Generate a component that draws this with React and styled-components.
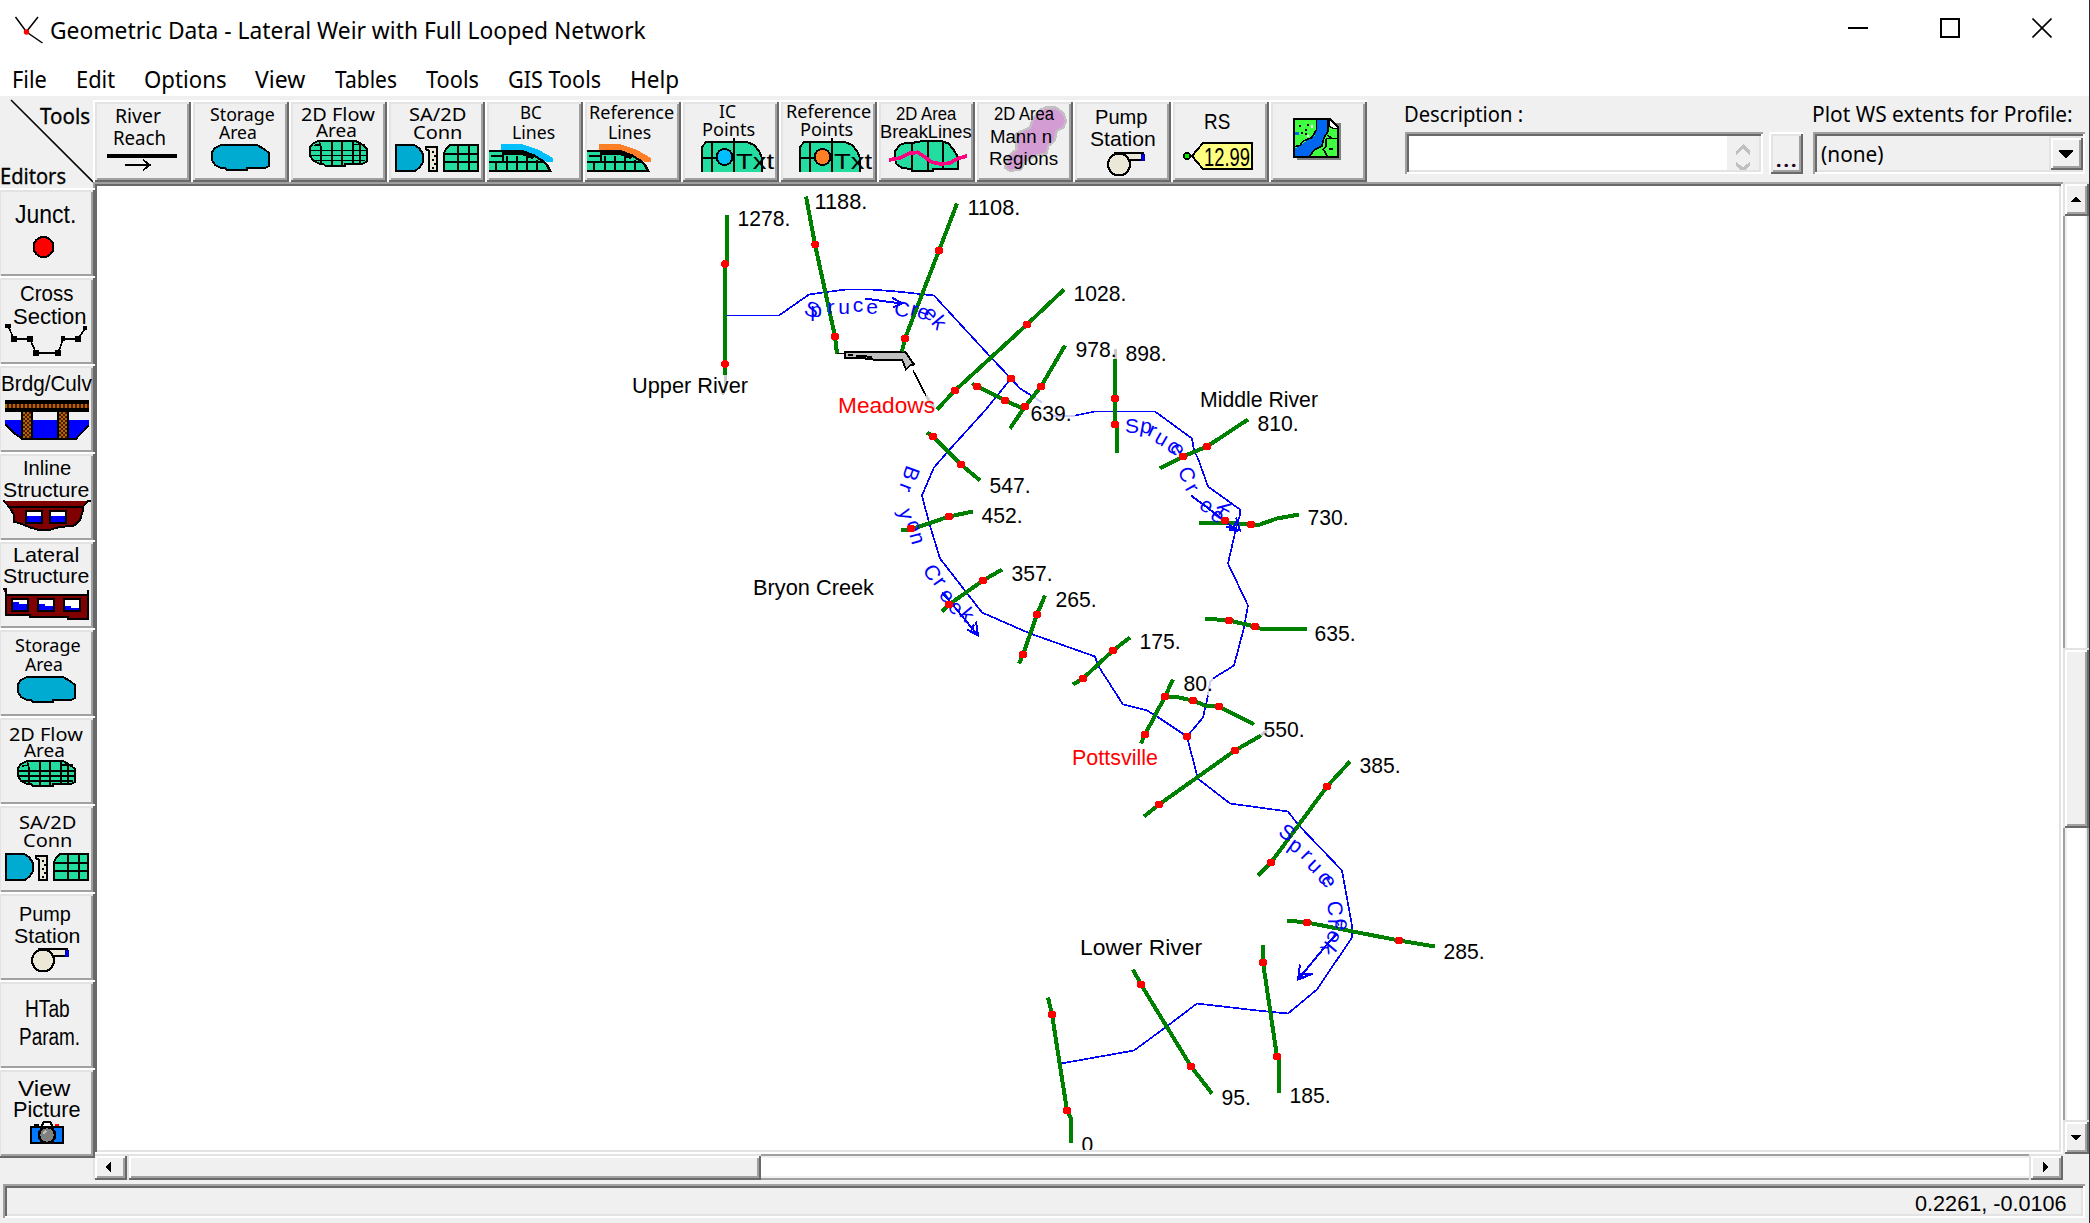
import React, { useLayoutEffect, useRef, useState } from "react";
import styled, { createGlobalStyle, css } from "styled-components";

const UI = '"Noto Sans", "Open Sans", sans-serif';
const ARIAL = '"Liberation Sans", Arial, sans-serif';

const GlobalStyle = createGlobalStyle`
  * { box-sizing: border-box; }
  body { margin: 0; background: #f0f0f0; overflow: hidden; }
`;

/* ---------- bevels ---------- */
const bevel = (tl1, tl2, br2, br1) => css`
  box-shadow: inset 2px 2px ${tl1}, inset -2px -2px ${br1}, inset 4px 4px ${tl2}, inset -4px -4px ${br2};
`;
const raised = bevel("#fff", "#e3e3e3", "#a0a0a0", "#696969");
const thumb = bevel("#e3e3e3", "#fff", "#a0a0a0", "#696969");
const sunken = bevel("#a0a0a0", "#696969", "#e3e3e3", "#fff");
const groove = bevel("#a0a0a0", "#f0f0f0", "#f0f0f0", "#a0a0a0");

/* ---------- text that fills a given width ---------- */
const FitSpan = styled.span`
  display: inline-block;
  white-space: pre;
  transform-origin: 0 50%;
`;
function Fit({ width, children }) {
  const ref = useRef(null);
  const [scale, setScale] = useState(1);
  useLayoutEffect(() => {
    setScale(width / ref.current.offsetWidth);
  }, [width, children]);
  return (
    <FitSpan ref={ref} style={{ transform: `scaleX(${scale})` }}>
      {children}
    </FitSpan>
  );
}

/* ---------- window frame ---------- */
const Window = styled.div`
  display: flex;
  flex-direction: column;
  width: 2090px;
  height: 1223px;
  background: #f0f0f0;
  border-right: 1px solid #2b2b2b;
  font-family: ${UI};
  color: #000;
  overflow: hidden;
`;
const TitleBar = styled.header`
  display: flex;
  align-items: center;
  height: 60px;
  padding-left: 14px;
  padding-right: 1px;
  background: #fff;
`;
const Title = styled.h1`
  flex: 1;
  margin: 0 0 0 6px;
  font-size: 23.5px;
  font-weight: 400;
  line-height: 60px;
`;
const Caption = styled.button`
  display: grid;
  place-items: center;
  width: 92px;
  height: 56px;
  padding: 0;
  margin-bottom: 4px;
  border: 0;
  background: none;
`;
const MenuBar = styled.nav`
  height: 36px;
  background: #fff;
  display: flex;
  padding-left: 12px;
`;
const MenuItem = styled.a`
  width: ${(p) => p.$w}px;
  font-size: 23px;
  line-height: 39px;
`;
const Body = styled.div`
  display: flex;
  height: 1084px;
`;
const LeftColumn = styled.aside`
  position: relative;
  z-index: 1;
  width: 93px;
`;
const Corner = styled.div`
  display: grid;
  height: 92px;
  > * { grid-area: 1 / 1; }
`;
const CornerText = styled.div`
  font-size: 21px;
  line-height: 24px;
  padding: ${(p) => p.$pad};
  -webkit-text-stroke: 0.3px #000;
`;
const RightColumn = styled.main`
  flex: 1;
  min-width: 0;
`;
const ToolRow = styled.div`
  display: flex;
  height: 86px;
  padding-top: 4px;
`;

/* ---------- picture buttons ---------- */
const Face = styled.button`
  display: grid;
  flex: none;
  width: 98px;
  height: ${(p) => p.$h}px;
  padding: 0;
  border: 0;
  overflow: hidden;
  background: #f0f0f0;
  color: #000;
  ${raised}
  ${(p) => p.$side && css`
    margin: 0 0 -2px -3px;
    position: relative;
  `}
  > * { grid-area: 1 / 1; }
`;
const Lines = styled.div`
  font-family: ${(p) => (p.$pixel ? ARIAL : UI)};
  font-size: ${(p) => p.$fs}px;
  line-height: ${(p) => p.$lh}px;
  padding-top: ${(p) => Math.max(0, p.$base + 1 - p.$lh / 2 - (p.$pixel ? 0.347 : 0.388) * p.$fs)}px;
  text-align: left;
`;
const Line = styled.div`
  height: ${(p) => p.$lh}px;
  padding-left: ${(p) => p.$x}px;
`;

function PictureButton({ x, y, h, side, item }) {
  const { lines = [], fs, lh = 20, base, pixel, art } = item;
  return (
    <Face $h={h} $side={side}>
      <svg width="98" height={h} viewBox={`${x} ${y} 98 ${h}`} shapeRendering="crispEdges">
        {art}
      </svg>
      {lines.length > 0 && (
        <Lines $fs={fs} $lh={lh} $base={base - y} $pixel={pixel}>
          {lines.map(([text, from, to], i) => (
            <Line key={i} $x={from - x} $lh={lh}>
              <Fit width={to - from}>{text}</Fit>
            </Line>
          ))}
        </Lines>
      )}
    </Face>
  );
}

/* ---------- glyphs ---------- */
const BLOB = "M10 1H46L53 5L58 9V22L54 24H36V26H16L14 24H10L4 21L1 16V8L4 4Z";
const StorageGlyph = ({ x, y }) => (
  <g transform={`translate(${x} ${y})`}>
    <path d={BLOB} fill="#00abd1" stroke="#000" strokeWidth="2" />
  </g>
);
const FlowGlyph = ({ x, y }) => (
  <g transform={`translate(${x} ${y})`} stroke="#000" strokeWidth="2">
    <path d={BLOB} fill="#23dca0" />
    <path d="M10 1L12 8V24M23 1V26M33 1V26M44 1V24M44 5H56M51 5V23M2 11H58M2 16H58M4 21H56M5 6L12 5" fill="none" strokeWidth="1.6" />
  </g>
);
const ConnGlyph = ({ x, y }) => (
  <g transform={`translate(${x} ${y})`} stroke="#000" strokeWidth="2">
    <path d="M1 1H19L24 4L28 10V18L25 23L20 27H1Z" fill="#00abd1" />
    <path d="M31 3H42V27H34V7L31 5Z" fill="#ece8d8" />
    <path d="M37 8H39M39 12H41M37 16H39M39 20H41M37 24H39" />
    <path d="M55 1H83V27H49V9L51 5Z" fill="#23dca0" />
    <path d="M63 1V27M74 1V27M49 10H83M49 18H83" fill="none" />
  </g>
);
const PumpGlyph = ({ x, y }) => (
  <g transform={`translate(${x} ${y})`} stroke="#000" strokeWidth="2">
    <path d="M8 1H36V8H22V9H10Z" fill="#ece8d8" />
    <rect x="34" y="2" width="3" height="6" fill="#00f" stroke="#00a" strokeWidth="1" />
    <circle cx="12" cy="12.5" r="11" fill="#ece8d8" />
  </g>
);
const BoundaryGlyph = ({ x, color }) => (
  <g transform={`translate(${x} 0)`}>
    <path d="M12 144H33L50 150L64 158V162L58 162L44 154L30 150H12Z" fill={color} />
    <path d="M0 151H30L44 155L54 161L58 165L61 172H0Z" fill="#23dca0" />
    <path d="M0 151H30L44 155L54 161L58 165L61 171H0" fill="none" stroke="#000" strokeWidth="2.4" />
    <path d="M14 152H32L45 157" fill="none" stroke="#000" strokeWidth="5" />
    <path d="M2 156H14M0 162H55M14 151V162M7 162V172M18 156V172M28 156V172M38 157V172M48 160V172" fill="none" stroke="#000" strokeWidth="2" />
  </g>
);
const PointGlyph = ({ x, color }) => (
  <g transform={`translate(${x} 0)`} stroke="#000" strokeWidth="2">
    <path d="M1 172V147L5 142H46L53 145L58 151L61 158V172" fill="#23dca0" />
    <path d="M11 142V172M33 138V172M1 158H16" fill="none" />
    <circle cx="23.500" cy="157" r="8" fill={color} />
    <text x="35" y="169" fontFamily="Liberation Sans" fontSize="22" strokeWidth="0" textLength="38" lengthAdjust="spacingAndGlyphs">Txt</text>
  </g>
);

const toolbarItems = [
  { lines: [["River", 115, 161], ["Reach", 113, 166]], fs: 19, lh: 22, base: 122,
    art: <g stroke="#000" fill="none"><path d="M107 156H177" strokeWidth="4" /><path d="M125 165H150M143 160L150 165L143 170" strokeWidth="1.8" /></g> },
  { lines: [["Storage", 210, 275], ["Area", 219, 257]], fs: 18, lh: 18, base: 119.7, art: <StorageGlyph x={211} y={144} /> },
  { lines: [["2D Flow", 301, 375], ["Area", 316, 357]], fs: 18, lh: 16, base: 119.7, art: <FlowGlyph x={309} y={139.500} /> },
  { lines: [["SA/2D", 409, 467], ["Conn", 413, 463]], fs: 18, lh: 18, base: 119.7, art: <ConnGlyph x={395} y={144} /> },
  { lines: [["BC", 520, 542], ["Lines", 512, 555]], fs: 18.5, lh: 20, base: 117.7, art: <BoundaryGlyph x={489} color="#00bfff" /> },
  { lines: [["Reference", 589, 674], ["Lines", 608, 651]], fs: 18.5, lh: 20, base: 117.7, art: <BoundaryGlyph x={587} color="#ff7f27" /> },
  { lines: [["IC", 719, 736], ["Points", 702, 755]], fs: 18.5, lh: 18.5, base: 117.3, art: <PointGlyph x={701} color="#00bfff" /> },
  { lines: [["Reference", 786, 871], ["Points", 800, 853]], fs: 18.5, lh: 18.5, base: 117.3, art: <PointGlyph x={799} color="#ff7f27" /> },
  { lines: [["2D Area", 896, 956], ["BreakLines", 880, 972]], fs: 17.5, lh: 17.7, base: 120, pixel: true,
    art: (
      <g transform="translate(870 96) scale(0.33333)" stroke="#000" strokeWidth="6">
        <path d="M90 147L105 141H125L160 135H212L235 142L250 160L265 185V218H188V226H125V220L95 215L80 205L75 190V165Z" fill="#23dca0" />
        <path d="M126 141V226M174 135V226M220 137V218" fill="none" />
        <path d="M57 192L90 186L118 172L143 169L160 180L185 198L212 204L240 201L262 188L291 180" fill="none" stroke="#ff0080" strokeWidth="11" />
      </g>
    ) },
  { lines: [["2D Area", 994, 1054], ["Mann n", 990, 1052], ["Regions", 989, 1058]], fs: 18, lh: 22.7, base: 119.5, pixel: true,
    art: (
      <g transform="translate(870 96) scale(0.33333)">
        <path d="M510 42L525 35H558L580 52L588 75L580 95L560 105L555 132L535 150L530 172L500 178L470 192L452 220L420 225L405 215L415 180L440 160V112L480 95L490 65Z" fill="#d39dd3" stroke="#c3bfc3" strokeWidth="7" />
      </g>
    ) },
  { lines: [["Pump", 1095, 1148], ["Station", 1090, 1156]], fs: 20.5, lh: 22.5, base: 123.3, pixel: true, art: <PumpGlyph x={1107} y={152} /> },
  { lines: [["RS", 1204, 1230]], fs: 22.5, lh: 22, base: 128.8, pixel: true,
    art: (
      <g>
        <path d="M1192 156L1203 143H1252V169H1203Z" fill="#ffff80" stroke="#000" strokeWidth="2" />
        <circle cx="1187" cy="156" r="3" fill="#0e0" stroke="#000" strokeWidth="1.5" />
        <text x="1204" y="165.500" fontFamily="Liberation Sans" fontSize="25" textLength="46" lengthAdjust="spacingAndGlyphs">12.99</text>
      </g>
    ) },
  { art: (
      <g transform="translate(870 96) scale(0.33333)">
        <path d="M1281 80H1412V192H1281Z" fill="#808080" />
        <path d="M1272 69H1380L1404 94V184H1272Z" fill="#40ff40" stroke="#000" strokeWidth="6" />
        <path d="M1340 72H1374V105L1362 122L1356 150L1335 160L1320 181H1275V158L1290 148L1318 130L1335 118L1340 100Z" fill="#0066f0" />
        <path d="M1275 152L1290 148L1300 135L1325 125L1340 100V72M1374 72V105L1362 126L1356 150L1335 160L1318 181M1368 128H1404M1368 128V150L1360 160L1372 180M1385 126L1372 118" fill="none" stroke="#000" strokeWidth="5" />
        <path d="M1378 70L1404 96L1390 98L1378 90Z" fill="#fff" stroke="#000" strokeWidth="4" />
        <path d="M1276 107H1288V118H1276Z" fill="#0066f0" />
        <path d="M1288 88H1294V94H1288ZM1306 98H1312V104H1306ZM1294 108H1300V114H1294ZM1310 84H1316V90H1310ZM1378 156H1388V161H1378ZM1304 112H1310V118H1304Z" />
        <path d="M1324 88H1330V96H1324ZM1312 118H1318V124H1312Z" fill="#fff" />
      </g>
    ) },
];

const sideItems = [
  { lines: [["Junct.", 15, 76]], fs: 26, lh: 24, base: 221.7, pixel: true,
    art: <circle cx="43.500" cy="247" r="10" fill="#f00" stroke="#000" strokeWidth="2" /> },
  { lines: [["Cross", 20, 73], ["Section", 13, 86]], fs: 22, lh: 23.5, base: 300, pixel: true,
    art: (
      <g transform="translate(0 180) scale(0.33333)">
        <path d="M24 438L42 477H90L108 519H174L190 477H234L256 444" fill="none" stroke="#000" strokeWidth="5" />
        <path d="M15 432H33V444H15ZM33 468H51V486H33ZM81 468H99V486H81ZM99 510H117V528H99ZM165 510H183V528H165ZM183 468H196V484H183ZM225 468H243V486H225ZM249 438H262V450H249Z" />
      </g>
    ) },
  { lines: [["Brdg/Culv", 1, 92]], fs: 22.5, lh: 24, base: 391.2, pixel: true,
    art: (
      <g transform="translate(0 180) scale(0.33333)">
        <path d="M15 720H267V738L228 776H66L15 736Z" fill="#00f" />
        <path d="M15 733L40 758L66 776H228L267 736" fill="none" stroke="#000" strokeWidth="6" />
        <path d="M15 660H267V696H15Z" />
        <path d="M63 690H99V776H63ZM171 690H207V776H171Z" />
        <path d="M15 672H267V684H15ZM69 696H93V773H69ZM177 696H201V773H177Z" fill="#800000" />
        <path d="M15 675H267M15 681H267" stroke="#808000" strokeWidth="6" strokeDasharray="6 6" />
        <path d="M72 696V773M84 696V773M180 696V773M192 696V773" stroke="#808000" strokeWidth="6" strokeDasharray="6 6" />
        <path d="M78 702V773M90 702V773M186 702V773M198 702V773" stroke="#808000" strokeWidth="6" strokeDasharray="6 6" />
      </g>
    ) },
  { lines: [["Inline", 23, 71], ["Structure", 3, 89]], fs: 21, lh: 22.3, base: 474, pixel: true,
    art: (
      <g transform="translate(0 180) scale(0.33333)" stroke="#000" strokeWidth="6">
        <path d="M10 962L28 981H248L264 964H273M248 981V995L240 1020L225 1036L175 1042L148 1050H118L90 1042L60 1030L42 1025V1005L28 981" fill="#800000" />
        <path d="M78 993H126V1028H78ZM150 993H198V1028H150Z" fill="#fff" />
        <path d="M81 1008H123V1025H81ZM153 1008H195V1025H153Z" fill="#00f" strokeWidth="0" />
      </g>
    ) },
  { lines: [["Lateral", 13, 79], ["Structure", 3, 89]], fs: 21, lh: 20.5, base: 561.8, pixel: true,
    art: (
      <g transform="translate(0 180) scale(0.33333)" stroke="#000" strokeWidth="6">
        <path d="M9 1226H18V1305H90V1311H204V1317H264V1230V1245H18" fill="#800000" />
        <path d="M36 1257H84V1293H36ZM114 1257H162V1293H114ZM192 1257H240V1293H192Z" fill="#fff" />
        <path d="M39 1266H57V1272H81V1290H39ZM117 1272H135V1278H159V1290H117ZM195 1278H213V1284H237V1290H195Z" fill="#00f" strokeWidth="0" />
      </g>
    ) },
  { lines: [["Storage", 15, 81], ["Area", 25, 63]], fs: 18, lh: 19, base: 651.5, art: <StorageGlyph x={17} y={676} /> },
  { lines: [["2D Flow", 9, 83], ["Area", 24, 65]], fs: 18, lh: 16, base: 740.2, art: <FlowGlyph x={17} y={760} /> },
  { lines: [["SA/2D", 19, 77], ["Conn", 23, 73]], fs: 18, lh: 18, base: 828, art: <ConnGlyph x={5} y={853} /> },
  { lines: [["Pump", 19, 71], ["Station", 14, 80]], fs: 21, lh: 22, base: 920.300, pixel: true, art: <PumpGlyph x={31} y={948} /> },
  { lines: [["HTab", 25, 70], ["Param.", 19, 80]], fs: 23, lh: 28, base: 1015.8, pixel: true },
  { lines: [["View", 18, 70], ["Picture", 13, 80]], fs: 22, lh: 21.7, base: 1095, pixel: true,
    art: (
      <g>
        <path d="M31 1127H63V1143H31Z" fill="#0078ff" stroke="#000" strokeWidth="2" />
        <path d="M42 1125L44 1122H50L52 1125V1129H42Z" fill="#fff" stroke="#000" strokeWidth="2" />
        <path d="M34 1124H39V1127H34Z" />
        <path d="M55 1124H59V1126H55Z" fill="#f00" />
        <circle cx="47" cy="1135" r="8" fill="#808080" stroke="#000" strokeWidth="2.500" />
        <path d="M43 1134L46 1131" stroke="#c0c0c0" strokeWidth="2" />
      </g>
    ) },
];

/* ---------- form area ---------- */
const FieldGroup = styled.div`
  margin-left: ${(p) => p.$ml}px;
`;
const FieldLabel = styled.label`
  display: block;
  height: 32px;
  margin-left: -1px;
  font-size: 21px;
  line-height: 29px;
`;
const FieldRow = styled.div`
  display: flex;
  gap: 6px;
`;
const Memo = styled.div`
  width: 358px;
  height: 42px;
  padding: 4px;
  display: flex;
  justify-content: flex-end;
  background: #fff;
  ${sunken}
`;
const MemoScroll = styled.div`
  display: grid;
  place-items: center;
  width: 32px;
  background: #f0f0f0;
`;
const DotsButton = styled.button`
  width: 34px;
  height: 42px;
  padding: 9px 0 0 6px;
  border: 0;
  background: #f0f0f0;
  color: #1a001a;
  font: 24px/24px ${UI};
  text-align: left;
  ${raised}
`;
const Combo = styled.div`
  display: flex;
  justify-content: space-between;
  width: 272px;
  height: 42px;
  padding: 4px 2px 4px 8px;
  font-size: 21.5px;
  line-height: 35px;
  background: #f0f0f0;
  ${sunken}
`;
const DropButton = styled.button`
  display: grid;
  place-items: center;
  width: 34px;
  height: 34px;
  padding: 0;
  border: 0;
  background: #f0f0f0;
  ${thumb}
`;

/* ---------- map and scrollbars ---------- */
const CanvasRow = styled.div`
  display: flex;
`;
const CanvasFrame = styled.div`
  width: 1970px;
  height: 972px;
  padding: 4px 2px 2px 4px;
  background: #fff;
  ${sunken}
  svg { display: block; }
`;
const Scrollbar = styled.div`
  display: flex;
  flex-direction: ${(p) => (p.$vertical ? "column" : "row")};
  width: ${(p) => (p.$vertical ? 26 : 1970)}px;
  height: ${(p) => (p.$vertical ? 972 : 26)}px;
  background: #fff;
  ${groove}
`;
const ScrollPart = styled.div`
  display: grid;
  place-items: center;
  flex: none;
  width: ${(p) => p.$w}px;
  height: ${(p) => p.$h}px;
  margin: ${(p) => p.$m || 0};
  background: #f0f0f0;
  ${thumb}
`;
const StatusBar = styled.footer`
  display: flex;
  justify-content: flex-end;
  width: 2082px;
  height: 34px;
  margin: 4px 0 0 3px;
  padding-right: 19px;
  font: 22.5px/40px ${ARIAL};
  ${sunken}
`;
const StatusText = styled.div`
  width: 151px;
`;

const RIVERS = [
  "727,315 779,315 809,294 823,292 846,289 871,289 897,291 934,295 991,357 1011,378 1020,388 1033,396",
  "1075,415 1095,411 1155,411 1192,438 1194,450 1198,458 1208,486 1240,509 1240,514 1236,528 1228,563 1248,605 1244,627 1234,665 1213,678",
  "1208,695 1203,717 1187,736",
  "1011,378 985,410 947,452 934,467 922,495 929,522 940,558 982,612 1030,633 1095,656 1098,665 1123,704 1147,710 1157,716 1187,736",
  "1187,736 1197,775 1199,779 1230,803 1288,811 1298,824 1342,870 1352,925 1352,937 1317,989 1288,1013 1257,1010 1197,1003 1168,1025 1134,1050 1061,1063",
];
const FADED_RIVERS = ["1033,396 1042,402", "1051,415 1075,415", "1213,678 1210,682 1208,695"];

const SECTIONS = [
  ["727,214 727,262 725,264 725,374", [[725, 263.5], [725, 363.7]]],
  ["806,196 815,244 835,336 837,353", [[815.3, 244], [835, 336]]],
  ["957,203 939,250 905,338 902,351", [[939, 250], [905, 338]]],
  ["1064,289 1027,324 955,390 937,409", [[1027, 324], [955, 390]]],
  ["1065,345 1041,386 1025,406 1010,428", [[1041, 386], [1025, 406]]],
  ["972,383 1005,400 1025,409", [[977, 386], [1005, 400]]],
  ["1115,358 1115,424 1117,426 1117,452", [[1115, 398], [1115, 424]]],
  ["1248,419 1207,446 1183,456 1160,468", [[1207, 446], [1183, 456]]],
  ["1199,522 1225,522 1251,524 1260,524 1277,518 1299,514", [[1225, 520], [1251, 524]]],
  ["1205,618 1229,620 1255,626 1260,628 1307,628", [[1229, 620], [1255, 626]]],
  ["927,432 933,436 961,464 980,480", [[933, 436], [961, 464]]],
  ["901,530 911,529 949,516 973,511", [[911, 528], [949, 516]]],
  ["942,611 949,604 983,580 1002,569", [[949, 604], [983, 580]]],
  ["1045,595 1037,614 1023,654 1019,663", [[1037, 614], [1023, 654]]],
  ["1130,637 1113,650 1083,678 1073,684", [[1113, 650], [1083, 678]]],
  ["1173,679 1165,696 1145,734 1141,743", [[1165, 696], [1145, 734]]],
  ["1165,696 1174,696 1193,700 1205,705 1219,706 1254,724", [[1193, 700], [1219, 706]]],
  ["1261,735 1235,750 1159,804 1144,816", [[1235, 750], [1159, 804]]],
  ["1350,761 1327,786 1271,862 1258,875", [[1327, 786], [1271, 862]]],
  ["1287,920 1307,922 1399,940 1435,946", [[1307, 922], [1399, 940]]],
  ["1263,944 1263,962 1277,1056 1279,1060 1279,1092", [[1263, 962], [1277, 1056]]],
  ["1133,969 1141,984 1191,1066 1212,1093", [[1141, 984], [1191, 1066]]],
  ["1048,997 1052,1014 1067,1110 1071,1118 1071,1142", [[1052, 1014], [1067, 1110]]],
];
const STATIONS = [
  ["1278.", 737, 225], ["1188.", 814, 208], ["1108.", 967, 214], ["1028.", 1073, 300], ["978.", 1075, 356], ["898.", 1125, 360],
  ["639.", 1030, 420], ["810.", 1257, 430], ["547.", 989, 492], ["452.", 981, 522], ["357.", 1011, 580], ["265.", 1055, 606],
  ["175.", 1139, 648], ["730.", 1307, 524], ["635.", 1314, 640], ["80.", 1183, 690], ["550.", 1263, 736], ["385.", 1359, 772],
  ["285.", 1443, 958], ["185.", 1289, 1102], ["95.", 1221, 1104], ["0", 1081, 1151],
];
const PLACES = [
  ["Upper River", 632, 392, 116], ["Middle River", 1200, 406, 118], ["Lower River", 1080, 954, 122], ["Bryon Creek", 753, 594, 121],
  ["Meadows", 838, 412, 97, "#f00"], ["Pottsville", 1072, 764, 86, "#f00"],
];
const LETTERS = [
  ["S", 812, 309, 20], ["p", 816, 311, 0], ["r", 831, 308, 0], ["u", 844, 308, 0], ["c", 858, 306, 0], ["e", 872, 308, 0],
  ["C", 902, 309, 10], ["r", 914, 310, 15], ["e", 923, 313, 20], ["e", 930, 314, 45], ["k", 938, 323, 50],
  ["S", 1132, 425, 0], ["p", 1146, 427, 10], ["r", 1152, 431, 25], ["u", 1161, 439, 30], ["c", 1173, 447, 35], ["e", 1177, 449, 60],
  ["C", 1187, 474, 70], ["r", 1191, 488, 60], ["e", 1206, 506, 35], ["e", 1217, 516, 35], ["k", 1223, 509, 75],
  ["B", 911, 473, 110], ["r", 905, 487, 110], ["y", 905, 514, 75], ["o", 913, 526, 75], ["n", 916, 538, 75],
  ["C", 932, 572, 60], ["r", 939, 582, 55], ["e", 946, 596, 55], ["e", 955, 608, 50], ["k", 966, 615, 50],
  ["S", 1287, 832, 35], ["p", 1295, 846, 35], ["r", 1306, 855, 45], ["u", 1314, 866, 45], ["c", 1324, 878, 50], ["e", 1328, 881, 60],
  ["C", 1335, 908, 85], ["r", 1333, 922, 90], ["e", 1341, 924, 95], ["e", 1333, 936, 115], ["k", 1327, 947, 130],
];
const FLOW_ARROWS = [
  "M865 298L886 301L902 303M892 297L902 303L893 307",
  "M1191 495L1206 506L1238 531M1229 529L1240 530M1226 526L1240 530L1236 517M1232 530L1237 520",
  "M942 592L955 607L978 635M967 629L978 635L976 621M971 631L974 624",
  "M1337 933L1326 945L1298 979M1300 964L1298 979L1313 973L1300 973L1304 978",
];

const stationWidth = (t) => (t.endsWith(".") ? (t.length - 1) * 11.7 + 6 : 11.7);

function RiverMap() {
  return (
    <svg width="1962" height="964" viewBox="97 185.5 1962 964" fontFamily="Liberation Sans, Arial, sans-serif" fontSize="22">
      <g fill="none" shapeRendering="crispEdges">
        {RIVERS.map((p) => <polyline key={p} points={p} stroke="#00f" strokeWidth="1.7" />)}
        {FADED_RIVERS.map((p) => <polyline key={p} points={p} stroke="#ccf" strokeWidth="2" />)}
        <path d="M836 353H845M913 370L926 395" stroke="#000" strokeWidth="1.7" />
        <path d="M845 351H905L914 364L910 365L906 369L902 359H873L858 357H845Z" fill="#c0c0c0" stroke="#000" strokeWidth="2" />
        <path d="M848 354H853M856 355H862L872 357" stroke="#000" strokeWidth="2" />
        <path d="M926 395L935 409M725 374V390L722 394M1115 348V358M1261 735L1267 730" stroke="#ccc" strokeWidth="3" />
        {SECTIONS.map(([p]) => <polyline key={p} points={p} stroke="#008000" strokeWidth="4" />)}
      </g>
      <g fill="#00f" textAnchor="middle" fontSize="21">
        {LETTERS.map(([c, x, y, a], i) => (
          <text key={i} transform={`translate(${x} ${y}) rotate(${a})`} y={c === c.toUpperCase() ? 7 : 5.5}>{c}</text>
        ))}
      </g>
      {FLOW_ARROWS.map((d) => <path key={d} d={d} fill="none" stroke="#00f" strokeWidth="2" shapeRendering="crispEdges" />)}
      <g fill="#f00" shapeRendering="crispEdges">
        {SECTIONS.flatMap(([, dots]) => dots).concat([[1011, 378], [1187, 736]]).map(([x, y], i) => (
          <circle key={i} cx={x} cy={y} r="4" />
        ))}
      </g>
      {STATIONS.map(([t, x, y]) => (
        <text key={t} x={x + 0.5} y={y} textLength={stationWidth(t)} lengthAdjust="spacingAndGlyphs">{t}</text>
      ))}
      {PLACES.map(([t, x, y, w, fill]) => (
        <text key={t} x={x} y={y} fill={fill} textLength={w} lengthAdjust="spacingAndGlyphs">{t}</text>
      ))}
    </svg>
  );
}

const Arrow = ({ d, w = 14, h = 14, fill = "#000" }) => (
  <svg width={w} height={h} viewBox={`0 0 ${w} ${h}`} shapeRendering="crispEdges"><path d={d} fill={fill} /></svg>
);

const MENU = [["File", 64, 35], ["Edit", 68, 39], ["Options", 111, 83], ["View", 80, 50], ["Tables", 91, 62], ["Tools", 82, 53], ["GIS Tools", 122, 93], ["Help", 60, 49]];

export default function App() {
  return (
    <>
      <GlobalStyle />
      <Window>
        <TitleBar>
          <svg width="30" height="30" viewBox="14 15 30 30" stroke="#000" strokeWidth="1.500">
            <path d="M15.500 17L26.500 32L42.500 43M38 17L27 31" fill="none" />
            <circle cx="26.500" cy="32" r="2.700" fill="#f00" stroke="none" />
          </svg>
          <Title><Fit width={596}>Geometric Data - Lateral Weir with Full Looped Network</Fit></Title>
          <Caption><svg width="20" height="20"><path d="M0 10H20" stroke="#000" strokeWidth="2" /></svg></Caption>
          <Caption><svg width="20" height="20"><rect x="1" y="1" width="18" height="18" fill="none" stroke="#000" strokeWidth="2" /></svg></Caption>
          <Caption><svg width="20" height="20"><path d="M0.500 0.500L19.500 19.500M19.500 0.500L0.500 19.500" stroke="#000" strokeWidth="1.600" /></svg></Caption>
        </TitleBar>
        <MenuBar>
          {MENU.map(([t, w, tw]) => <MenuItem key={t} $w={w}><Fit width={tw}>{t}</Fit></MenuItem>)}
        </MenuBar>
        <Body>
          <LeftColumn>
            <Corner>
              <svg width="93" height="92" viewBox="0 96 93 92"><path d="M11 100L93 182" stroke="#000" strokeWidth="1.600" /></svg>
              <CornerText $pad="8px 0 0 40px"><Fit width={50}>Tools</Fit></CornerText>
              <CornerText $pad="68px 0 0 0"><Fit width={66}>Editors</Fit></CornerText>
            </Corner>
            {sideItems.map((item, i) => (
              <PictureButton key={i} side x={-3} y={188 + 88 * i} h={90} item={item} />
            ))}
          </LeftColumn>
          <RightColumn>
            <ToolRow>
              {toolbarItems.map((item, i) => (
                <PictureButton key={i} x={93 + 98 * i} y={100} h={82} item={item} />
              ))}
              <FieldGroup $ml={38}>
                <FieldLabel><Fit width={119}>Description :</Fit></FieldLabel>
                <FieldRow>
                  <Memo>
                    <MemoScroll>
                      <Arrow w={14} h={34} fill="#c0c0c0" d="M7 8L14 15V19L7 13L0 19V15ZM0 26V30L7 36L14 30V26L7 31Z" />
                    </MemoScroll>
                  </Memo>
                  <DotsButton><Fit width={22}>...</Fit></DotsButton>
                </FieldRow>
              </FieldGroup>
              <FieldGroup $ml={10}>
                <FieldLabel><Fit width={261}>Plot WS extents for Profile:</Fit></FieldLabel>
                <Combo>
                  <Fit width={63}>(none)</Fit>
                  <DropButton><Arrow d="M0 4H14V6L7 12L0 6Z" /></DropButton>
                </Combo>
              </FieldGroup>
            </ToolRow>
            <CanvasRow>
              <CanvasFrame><RiverMap /></CanvasFrame>
              <Scrollbar $vertical>
                <ScrollPart $w={26} $h={34}><Arrow d="M7 4L12 10H2Z" /></ScrollPart>
                <ScrollPart $w={26} $h={180} $m="432px 0 292px" />
                <ScrollPart $w={26} $h={34}><Arrow d="M2 5H12L7 11Z" /></ScrollPart>
              </Scrollbar>
            </CanvasRow>
            <Scrollbar>
              <ScrollPart $w={34} $h={26}><Arrow d="M8 2V12L2 7Z" /></ScrollPart>
              <ScrollPart $w={634} $h={26} $m="0 1268px 0 0" />
              <ScrollPart $w={34} $h={26}><Arrow d="M4 2V12L10 7Z" /></ScrollPart>
            </Scrollbar>
          </RightColumn>
        </Body>
        <StatusBar><StatusText><Fit width={152}>0.2261, -0.0106</Fit></StatusText></StatusBar>
      </Window>
    </>
  );
}
